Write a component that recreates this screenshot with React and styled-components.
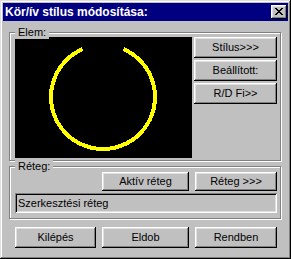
import React from 'react';
import styled, { createGlobalStyle } from "styled-components";

const GlobalStyle = createGlobalStyle`
  html, body {
    margin: 0;
    padding: 0;
    background: #c0c0c0;
  }
  body {
    font-family: "Liberation Sans", Arial, sans-serif;
    font-size: 11px;
  }
`;

const Window = styled.div`
  box-sizing: border-box;
  width: 291px;
  height: 259px;
  padding: 3px;
  background-color: #c0c0c0;
  box-shadow: inset -1px -1px #000, inset 1px 1px #dfdfdf,
    inset -2px -2px #808080, inset 2px 2px #fff;
`;

const TitleBar = styled.div`
  display: flex;
  align-items: center;
  justify-content: space-between;
  height: 18px;
  padding-left: 2px;
  background-color: #000080;
`;

const Title = styled.span`
  color: #fff;
  font-weight: bold;
  font-size: 12px;
  line-height: 14px;
`;

const Bevel = styled.button`
  box-sizing: border-box;
  margin: 0;
  padding: 0;
  border: none;
  background-color: #c0c0c0;
  color: #000;
  font-family: "Liberation Sans", Arial, sans-serif;
  font-size: 11px;
  box-shadow: inset -1px -1px #000, inset 1px 1px #fff,
    inset -2px -2px #808080, inset 2px 2px #dfdfdf;
`;

const CloseButton = styled(Bevel)`
  display: flex;
  align-items: center;
  justify-content: center;
  width: 16px;
  height: 14px;
  margin-right: 1px;
  padding-bottom: 1px;
`;

const Button = styled(Bevel)`
  width: ${p => p.$w}px;
  height: ${p => p.$h || 21}px;
  line-height: ${p => p.$h || 21}px;
  text-align: center;
`;

const Body = styled.div`
  padding: 0 7px 0 6px;
`;

const Group = styled.div`
  position: relative;
  margin-top: ${p => p.$mt}px;
  padding: ${p => p.$pad};
  border: 1px solid #808080;
  box-shadow: inset 1px 1px #fff, 1px 1px #fff;
`;

const GroupLabel = styled.span`
  position: absolute;
  top: -7px;
  left: 5px;
  padding: 0 3px;
  line-height: 13px;
  background-color: #c0c0c0;
  color: #000;
`;

const ElemRow = styled.div`
  display: flex;
  gap: 2px;
`;

const Canvas = styled.div`
  width: 177px;
  height: 121px;
  background-color: #000;
  svg {
    display: block;
  }
`;

const SideButtons = styled.div`
  display: flex;
  flex-direction: column;
  gap: 2px;
`;

const LayerButtons = styled.div`
  display: flex;
  justify-content: flex-end;
  gap: 6px;
  margin-bottom: 2px;
`;

const Field = styled.div`
  box-sizing: border-box;
  width: 262px;
  height: 20px;
  padding-left: 3px;
  line-height: 20px;
  color: #000;
  background-color: #c0c0c0;
  box-shadow: inset 1px 1px #808080, inset -1px -1px #fff,
    inset 2px 2px #000, inset -2px -2px #dfdfdf;
`;

const Footer = styled.div`
  display: flex;
  gap: 6px;
  margin-top: 8px;
  padding-left: 6px;
`;

const App = () => {
  const cx = 88, cy = 60, r = 52;
  const a = 23 * Math.PI / 180;
  const sx = cx + r * Math.sin(a), sy = cy - r * Math.cos(a);
  const ex = cx - r * Math.sin(a);

  return(
    <>
      <GlobalStyle />
      <Window>
        <TitleBar>
          <Title>Kör/ív stílus módosítása:</Title>
          <CloseButton>
            <svg width="8" height="7" viewBox="0 0 8 7" shapeRendering="crispEdges">
              <path d="M0 0h2v1h-2zM6 0h2v1h-2zM1 1h2v1h-2zM5 1h2v1h-2zM2 2h4v1h-4zM3 3h2v1h-2zM2 4h4v1h-4zM1 5h2v1h-2zM5 5h2v1h-2zM0 6h2v1h-2zM6 6h2v1h-2z" fill="#000"/>
            </svg>
          </CloseButton>
        </TitleBar>
        <Body>
          <Group $mt={11} $pad="4px 3px 2px 5px">
            <GroupLabel>Elem:</GroupLabel>
            <ElemRow>
              <Canvas>
                <svg width="177" height="121" shapeRendering="crispEdges">
                  <path d={`M ${sx} ${sy} A ${r} ${r} 0 1 1 ${ex} ${sy}`} fill="none" stroke="#ffff00" strokeWidth="4"/>
                </svg>
              </Canvas>
              <SideButtons>
                <Button $w={83}>Stílus&gt;&gt;&gt;</Button>
                <Button $w={83}>Beállított:</Button>
                <Button $w={83}>R/D Fi&gt;&gt;</Button>
              </SideButtons>
            </ElemRow>
          </Group>
          <Group $mt={5} $pad="5px 3px 5px 5px">
            <GroupLabel>Réteg:</GroupLabel>
            <LayerButtons>
              <Button $w={87} $h={19}>Aktív réteg</Button>
              <Button $w={82} $h={19}>Réteg &gt;&gt;&gt;</Button>
            </LayerButtons>
            <Field>Szerkesztési réteg</Field>
          </Group>
          <Footer>
            <Button $w={81}>Kilépés</Button>
            <Button $w={87}>Eldob</Button>
            <Button $w={82}>Rendben</Button>
          </Footer>
        </Body>
      </Window>
    </>
  )
}

export default App;
